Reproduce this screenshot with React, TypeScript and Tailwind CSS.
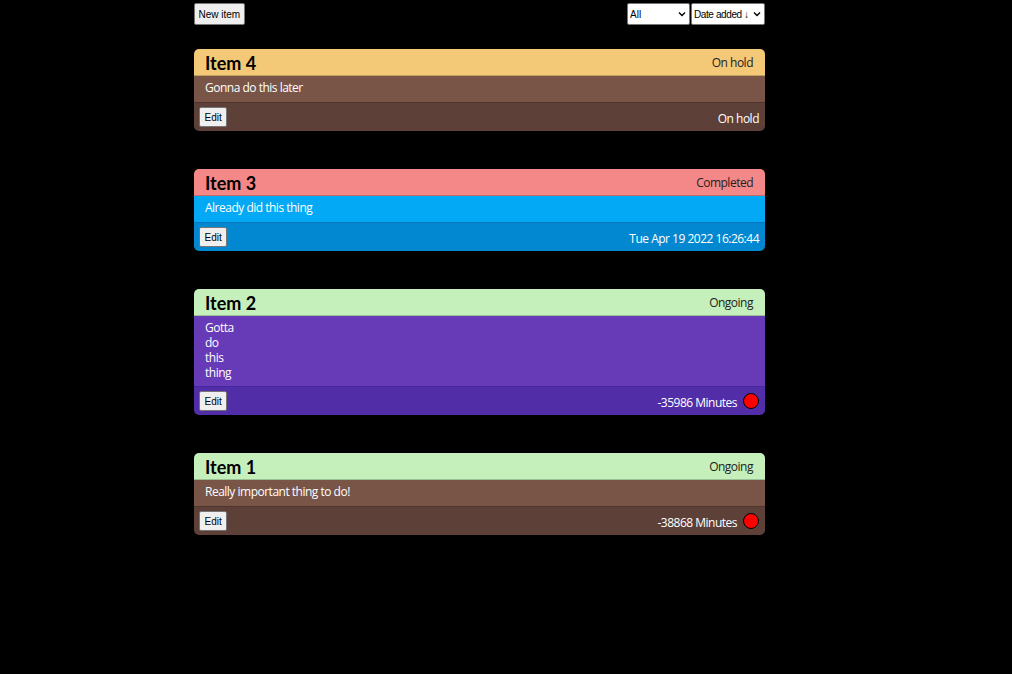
type Item = {
  title: string;
  status: string;
  lines: string[];
  footer: string;
  dot?: boolean;
  head: string;
  body: string;
  foot: string;
  line: string;
};

const items: Item[] = [
  {
    title: "Item 4",
    status: "On hold",
    lines: ["Gonna do this later"],
    footer: "On hold",
    head: "bg-[#f3c877]",
    body: "bg-[#795548]",
    foot: "bg-[#5d4037]",
    line: "border-[#4e342e]",
  },
  {
    title: "Item 3",
    status: "Completed",
    lines: ["Already did this thing"],
    footer: "Tue Apr 19 2022 16:26:44",
    head: "bg-[#f48888]",
    body: "bg-[#03a9f4]",
    foot: "bg-[#0288d1]",
    line: "border-[#0277bd]",
  },
  {
    title: "Item 2",
    status: "Ongoing",
    lines: ["Gotta", "do", "this", "thing"],
    footer: "-35986 Minutes",
    dot: true,
    head: "bg-[#c5efbb]",
    body: "bg-[#673ab7]",
    foot: "bg-[#512da8]",
    line: "border-[#4527a0]",
  },
  {
    title: "Item 1",
    status: "Ongoing",
    lines: ["Really important thing to do!"],
    footer: "-38868 Minutes",
    dot: true,
    head: "bg-[#c5efbb]",
    body: "bg-[#795548]",
    foot: "bg-[#5d4037]",
    line: "border-[#4e342e]",
  },
];

function Chevron() {
  return (
    <svg
      className="absolute right-[4px] top-[8px] pointer-events-none"
      width="8"
      height="6"
      viewBox="0 0 8 6"
    >
      <path d="M1 1.5 L4 4.5 L7 1.5" fill="none" stroke="#000" strokeWidth="1.4" />
    </svg>
  );
}

function Card({ item }: { item: Item }) {
  const multi = item.lines.length > 1;
  return (
    <div className="w-[571px] rounded-[5px] overflow-hidden">
      <div
        className={`${item.head} h-[27px] flex items-center justify-between pl-[11px] pr-[12px] pt-[1px] border-b border-black/20`}
      >
        <span className="font-['Lato',sans-serif] text-[18px] font-bold text-black leading-none">
          {item.title}
        </span>
        <span className="text-[12px] tracking-[-0.5px] text-[#222] leading-none">
          {item.status}
        </span>
      </div>
      <div
        className={`${item.body} px-[11px] pt-[4px] ${multi ? "pb-[6px]" : "pb-[7px]"} text-[12px] tracking-[-0.5px] leading-[15px] text-white`}
      >
        {item.lines.map((l) => (
          <div key={l}>{l}</div>
        ))}
      </div>
      <div
        className={`${item.foot} ${item.line} border-t h-[29px] flex items-center justify-between pl-[5px] pr-[6px]`}
      >
        <button className="h-[20px] px-[4.5px] bg-[#efefef] border border-[#767676] rounded-[2px] text-[10px] text-black font-['Liberation_Sans',Arial,sans-serif]">
          Edit
        </button>
        <div className="flex items-center gap-[6px] text-[12px] tracking-[-0.5px] text-white">
          <span className="pt-[3px]">{item.footer}</span>
          {item.dot && (
            <span className="w-[16px] h-[16px] rounded-full bg-[#ff0000] border-[1.5px] border-black" />
          )}
        </div>
      </div>
    </div>
  );
}

export default function App() {
  return (
    <div className="min-h-[674px] bg-black font-['Open_Sans','Noto_Sans',sans-serif]">
      <div className="pl-[194px] pt-[3px] w-[765px]">
        <div className="flex items-start justify-between h-[22px]">
          <button className="h-[22px] px-[3.5px] bg-[#efefef] border border-[#767676] rounded-[2px] text-[10px] text-black font-['Liberation_Sans',Arial,sans-serif]">
            New item
          </button>
          <div className="flex gap-[1px] font-['Liberation_Sans',Arial,sans-serif]">
            <div className="relative">
              <select className="block appearance-none h-[22px] w-[63px] bg-white text-black text-[10px] border border-[#767676] rounded-[2px] pl-[2px]">
                <option>All</option>
              </select>
              <Chevron />
            </div>
            <div className="relative">
              <select className="block appearance-none h-[22px] w-[74px] bg-white text-black text-[10px] tracking-[-0.4px] border border-[#767676] rounded-[2px] pl-[2px] pr-[12px]">
                <option>Date added ↓</option>
              </select>
              <Chevron />
            </div>
          </div>
        </div>
        <div className="mt-[24px] flex flex-col gap-[38px]">
          {items.map((it) => (
            <Card key={it.title} item={it} />
          ))}
        </div>
      </div>
    </div>
  );
}
